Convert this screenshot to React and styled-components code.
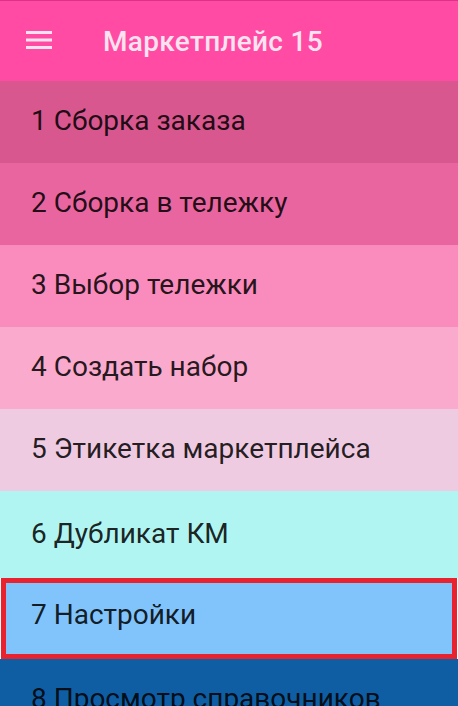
import React from 'react';
import styled, { createGlobalStyle } from 'styled-components';

const items = [
  { label: '1 Сборка заказа', bg: '#d8578f', h: 82 },
  { label: '2 Сборка в тележку', bg: '#e9659f', h: 82 },
  { label: '3 Выбор тележки', bg: '#f98cbc', h: 82 },
  { label: '4 Создать набор', bg: '#f9aacd', h: 82 },
  { label: '5 Этикетка маркетплейса', bg: '#efcbe1', h: 82 },
  { label: '6 Дубликат КМ', bg: '#b1f5f2', h: 87 },
  { label: '7 Настройки', bg: '#80c4fb', h: 81, selected: true },
  { label: '8 Просмотр справочников', bg: '#0f5ea3', h: 82 },
];

const App = () => {
  return (
    <>
      <GlobalStyle />
      <Screen>
        <Toolbar>
          <MenuButton aria-label='menu'>
            <svg width='26' height='20' viewBox='0 0 26 20'>
              <rect x='0' y='1' width='26' height='3' fill='#fde3f0' />
              <rect x='0' y='8.5' width='26' height='3' fill='#fde3f0' />
              <rect x='0' y='16' width='26' height='3' fill='#fde3f0' />
            </svg>
          </MenuButton>
          <Title>Маркетплейс 15</Title>
        </Toolbar>
        <List>
          {items.map((item) => (
            <Row
              key={item.label}
              $bg={item.bg}
              $h={item.h}
              $selected={item.selected}
            >
              {item.label}
            </Row>
          ))}
        </List>
      </Screen>
    </>
  );
};

export default App;

const GlobalStyle = createGlobalStyle`
  html, body {
    margin: 0;
    padding: 0;
    background: #ffffff;
  }
  body {
    font-family: Roboto, "Noto Sans", sans-serif;
  }
`;

const Screen = styled.div`
  width: 458px;
  height: 706px;
  overflow: hidden;
  display: flex;
  flex-direction: column;
`;

const Toolbar = styled.header`
  height: 81px;
  flex-shrink: 0;
  box-sizing: border-box;
  border-top: 1px solid #d9348a;
  background: #ff4ba3;
  display: flex;
  align-items: center;
  padding-left: 26px;
`;

const MenuButton = styled.div`
  width: 26px;
  height: 20px;
  display: flex;
  margin-top: -2px;
`;

const Title = styled.h1`
  margin: 0 0 0 51px;
  font-size: 28px;
  font-weight: 500;
  color: #fde3f0;
  letter-spacing: 0.3px;
`;

const List = styled.div`
  display: flex;
  flex-direction: column;
`;

const Row = styled.div`
  height: ${(p) => p.$h}px;
  flex-shrink: 0;
  box-sizing: border-box;
  background: ${(p) => p.$bg};
  display: flex;
  align-items: center;
  padding: ${(p) => (p.$selected ? '0 0 8px 25px' : '0 0 3px 31px')};
  margin: ${(p) => (p.$selected ? '0 1px' : '0')};
  border: ${(p) => (p.$selected ? '5px solid #e8222e' : 'none')};
  font-size: 28px;
  color: rgba(0, 0, 0, 0.87);
  white-space: nowrap;
`;
